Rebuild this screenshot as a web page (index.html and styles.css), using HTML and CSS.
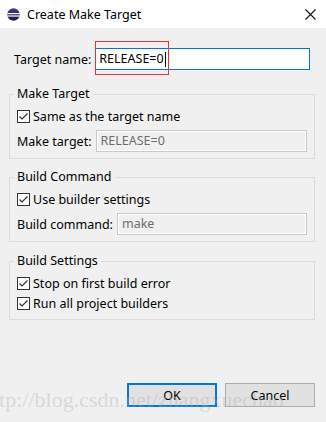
FILE: index.html
```html
<!DOCTYPE html>
<html lang="en">
  <head>
    <meta charset="UTF-8" />
    <meta name="viewport" content="width=device-width, initial-scale=1.0" />
    <title>Create Make Target</title>
    <link rel="stylesheet" href="styles.css">
  </head>
  <body>
    <div class="window">
      <div class="titlebar">
        <svg class="app-icon" width="13" height="13" viewBox="0 0 13 13">
          <defs>
            <linearGradient id="eclipse" x1="0" y1="0" x2="0" y2="1">
              <stop offset="0" stop-color="#473a8a" />
              <stop offset="1" stop-color="#1f1840" />
            </linearGradient>
          </defs>
          <circle cx="6.5" cy="6.5" r="6.2" fill="url(#eclipse)" />
          <rect x="0.3" y="5" width="12.4" height="1.2" fill="#fff" />
          <rect x="0.3" y="7.4" width="12.4" height="1.2" fill="#fff" />
        </svg>
        <span class="title">Create Make Target</span>
        <svg class="close" width="11" height="11" viewBox="0 0 11 11">
          <path d="M0.5 0.5 L10.5 10.5 M10.5 0.5 L0.5 10.5" stroke="#111" stroke-width="1.1" />
        </svg>
      </div>

      <div class="content">
        <div class="row target-row">
          <span class="label">Target name:</span>
          <div class="input focused">
            RELEASE=0<span class="caret"></span>
            <div class="highlight"></div>
          </div>
        </div>

        <fieldset class="group">
          <legend>Make Target</legend>
          <label class="check">
            <svg width="13" height="13" viewBox="0 0 13 13"><rect x="0.5" y="0.5" width="12" height="12" fill="#fff" stroke="#333" /><path d="M2.5 6.5 L5 9 L10.5 3.5" fill="none" stroke="#333" stroke-width="1.2" /></svg>
            Same as the target name
          </label>
          <div class="row field">
            <span class="label">Make target:</span>
            <div class="input disabled">RELEASE=0</div>
          </div>
        </fieldset>

        <fieldset class="group">
          <legend>Build Command</legend>
          <label class="check">
            <svg width="13" height="13" viewBox="0 0 13 13"><rect x="0.5" y="0.5" width="12" height="12" fill="#fff" stroke="#333" /><path d="M2.5 6.5 L5 9 L10.5 3.5" fill="none" stroke="#333" stroke-width="1.2" /></svg>
            Use builder settings
          </label>
          <div class="row field">
            <span class="label">Build command:</span>
            <div class="input disabled">make</div>
          </div>
        </fieldset>

        <fieldset class="group last">
          <legend>Build Settings</legend>
          <label class="check">
            <svg width="13" height="13" viewBox="0 0 13 13"><rect x="0.5" y="0.5" width="12" height="12" fill="#fff" stroke="#333" /><path d="M2.5 6.5 L5 9 L10.5 3.5" fill="none" stroke="#333" stroke-width="1.2" /></svg>
            Stop on first build error
          </label>
          <label class="check">
            <svg width="13" height="13" viewBox="0 0 13 13"><rect x="0.5" y="0.5" width="12" height="12" fill="#fff" stroke="#333" /><path d="M2.5 6.5 L5 9 L10.5 3.5" fill="none" stroke="#333" stroke-width="1.2" /></svg>
            Run all project builders
          </label>
        </fieldset>

        <div class="buttons">
          <button class="btn default">OK</button>
          <button class="btn">Cancel</button>
        </div>
      </div>

      <div class="watermark">http://blog.csdn.net/zhangxuechao</div>
    </div>
  </body>
</html>
```

FILE: styles.css
```css
body {
  margin: 0;
  background-color: #f0f0f0;
  font-family: "Noto Sans", "Noto Sans CJK SC", sans-serif;
  font-size: 12.5px;
  color: #000;
}

.window {
  position: relative;
  width: 326px;
  height: 422px;
  overflow: hidden;
  background-color: #f0f0f0;
}

.titlebar {
  display: flex;
  align-items: center;
  height: 28px;
  padding: 0 10px 0 7px;
  background-color: #fff;
}

.app-icon {
  margin-right: 7px;
}

.title {
  flex: 1;
}

.content {
  padding: 0 11px 0 9px;
}

.row {
  display: flex;
  align-items: center;
  height: 22px;
}

.label {
  margin-right: 4px;
  white-space: nowrap;
}

.target-row {
  margin: 20px 5px 0 5px;
}

.input {
  flex: 1;
  box-sizing: border-box;
  height: 22px;
  padding-left: 3px;
  line-height: 20px;
}

.input.focused {
  position: relative;
  display: flex;
  align-items: center;
  border: 1px solid #0078d7;
  background-color: #fff;
}

.caret {
  width: 1px;
  height: 15px;
  margin-left: 1px;
  background-color: #000;
}

.input.disabled {
  border: 1px solid #c8c8c8;
  box-shadow: inset 0 0 0 1px #fff;
  color: #6d6d6d;
  padding-left: 4px;
}

.highlight {
  position: absolute;
  left: -1px;
  top: -8px;
  width: 72px;
  height: 32px;
  border: 1px solid #e53333;
}

.group {
  margin: 16px 0 0;
  padding: 6px 7px 6px;
  border: 1px solid #dcdcdc;
  min-width: 0;
}

.group + .group {
  margin-top: 10px;
}

.group.last {
  margin-top: 11px;
  padding-bottom: 8px;
}

.group legend {
  padding: 0 3px;
  margin-left: -3px;
  line-height: 16px;
}

.check {
  display: flex;
  align-items: center;
  gap: 3px;
  height: 16px;
}

.check + .check {
  margin-top: 4px;
}

.field {
  margin-top: 6px;
}

.buttons {
  display: flex;
  justify-content: flex-end;
  gap: 8px;
  margin-top: 63px;
}

.btn {
  width: 90px;
  height: 24px;
  padding: 0;
  font-family: inherit;
  font-size: 12.5px;
  color: #000;
  background-color: #e1e1e1;
  border: 1px solid #adadad;
}

.btn.default {
  border: 2px solid #0078d7;
}

.watermark {
  position: absolute;
  left: -18px;
  top: 387px;
  font-family: "Liberation Serif", serif;
  font-size: 22px;
  color: rgba(170, 170, 170, 0.35);
  white-space: nowrap;
  pointer-events: none;
}
```
